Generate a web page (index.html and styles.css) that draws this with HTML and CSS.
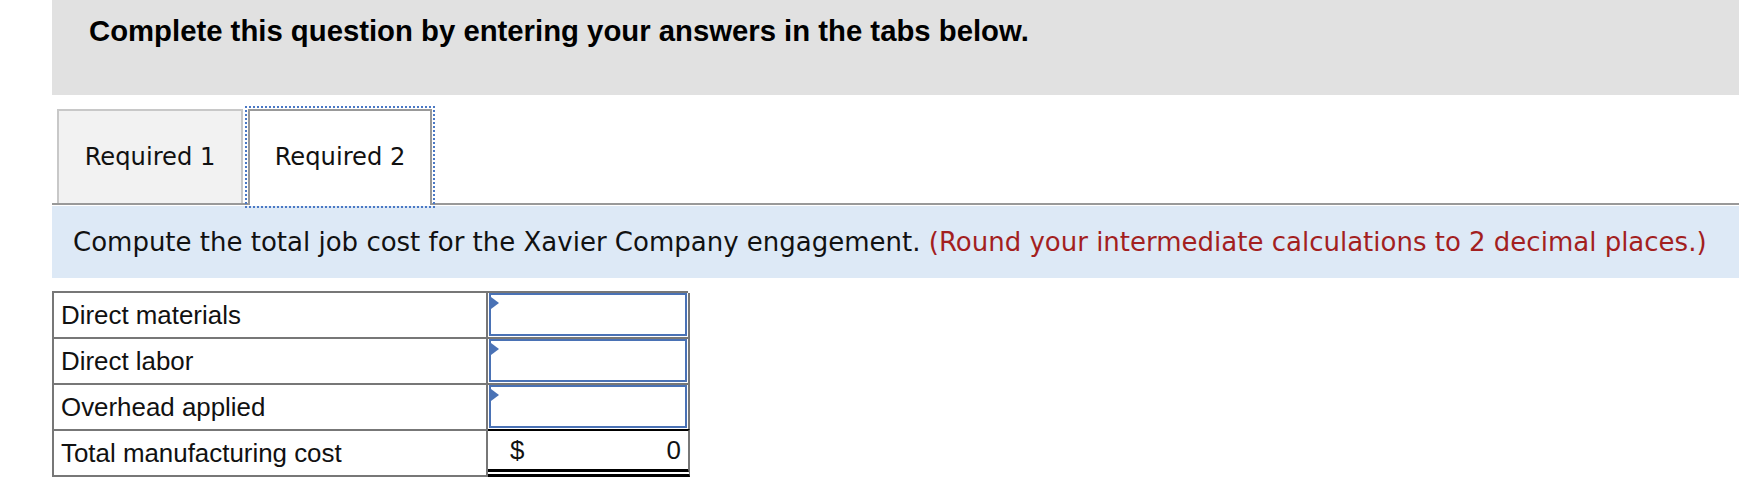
FILE: index.html
```html
<!DOCTYPE html>
<html>
<head>
<meta charset="utf-8">
<link rel="stylesheet" href="styles.css">
</head>
<body>
<div class="page">
  <div class="prompt">
    <h1 class="prompt-title">Complete this question by entering your answers in the tabs below.</h1>
  </div>
  <div class="tabs">
    <div class="tab">Required 1</div>
    <div class="tab tab-active">Required 2</div>
  </div>
  <div class="instruction">
    <p class="instruction-text">Compute the total job cost for the Xavier Company engagement. <span class="hint">(Round your intermediate calculations to 2 decimal places.)</span></p>
  </div>
  <div class="sheet">
    <div class="cell label">Direct materials</div>
    <div class="cell value"><div class="input"></div></div>
    <div class="cell label">Direct labor</div>
    <div class="cell value"><div class="input"></div></div>
    <div class="cell label">Overhead applied</div>
    <div class="cell value"><div class="input"></div></div>
    <div class="cell label last">Total manufacturing cost</div>
    <div class="cell value total"><span class="cur">$</span><span class="amt">0</span></div>
  </div>
</div>
</body>
</html>
```
FILE: styles.css
```css
html, body {
  margin: 0;
  padding: 0;
  background: #fff;
}
.page {
  padding-left: 52px;
}
.prompt {
  background: #e1e1e1;
  height: 95px;
  box-sizing: border-box;
  padding: 14px 0 0 37px;
}
.prompt-title {
  margin: 0;
  font-family: "Liberation Sans", Arial, sans-serif;
  font-weight: bold;
  font-size: 29.3px;
  line-height: 33px;
  color: #000;
}
.tabs {
  margin-top: 14px;
  padding-left: 5px;
  display: flex;
  align-items: flex-start;
  border-bottom: 2px solid #999;
  height: 94px;
}
.tab {
  box-sizing: border-box;
  width: 186px;
  height: 94px;
  border: 2px solid #c8c8c8;
  border-bottom: none;
  background: #f2f2f2;
  font-family: "DejaVu Sans", Verdana, sans-serif;
  font-size: 24.2px;
  color: #111;
  display: flex;
  align-items: center;
  justify-content: center;
  padding-bottom: 0;
}
.tab-active {
  margin-left: 5px;
  width: 184px;
  height: 96px;
  background: #fff;
  border: 2px solid #999;
  border-bottom: none;
  outline: 2px dotted #4a78c4;
  outline-offset: 1px;
  position: relative;
  z-index: 1;
  padding-bottom: 2px;
}
.instruction {
  margin-top: 1px;
  background: #dde9f6;
  height: 72px;
  box-sizing: border-box;
  padding-left: 21px;
  display: flex;
  align-items: center;
}
.instruction-text {
  margin: 0;
  font-family: "DejaVu Sans", Verdana, sans-serif;
  font-size: 26px;
  color: #111;
  white-space: nowrap;
}
.hint {
  color: #a31f1f;
}
.sheet {
  margin-top: 13px;
  display: grid;
  grid-template-columns: 434px 202px;
  grid-auto-rows: 46px;
  width: 636px;
  border-top: 2px solid #777;
  border-left: 2px solid #777;
  box-sizing: border-box;
  font-family: "Liberation Sans", Arial, sans-serif;
  font-size: 25.9px;
  color: #111;
}
.cell {
  border-right: 2px solid #777;
  border-bottom: 2px solid #777;
  box-sizing: border-box;
  display: flex;
  align-items: center;
}
.label {
  padding-left: 7px;
}
.value {
  padding: 0 1px 1px 1px;
}
.input {
  position: relative;
  box-sizing: border-box;
  width: 100%;
  height: 100%;
  border: 2px solid #4a72b5;
}
.input::before {
  content: "";
  position: absolute;
  left: 0;
  top: 2px;
  border-left: 8px solid #4a72b5;
  border-top: 6px solid transparent;
  border-bottom: 6px solid transparent;
}
.total {
  border-top: 2px solid #000;
  margin-top: -2px;
  height: 48px;
  border-bottom: 8px double #000;
  justify-content: space-between;
  padding: 0 7px 0 22px;
}
```
